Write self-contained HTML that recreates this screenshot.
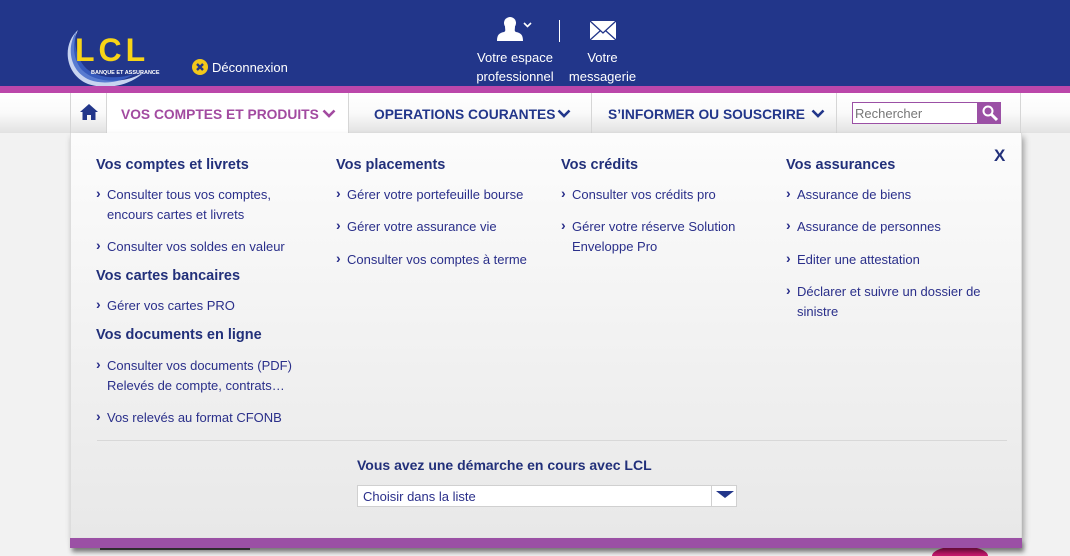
<!DOCTYPE html>
<html><head><meta charset="utf-8"><style>
*{margin:0;padding:0;box-sizing:border-box}
html,body{width:1070px;height:556px;overflow:hidden}
body{background:#f2f2f2;font-family:"Liberation Sans",Arial,sans-serif}
#root{position:relative;width:1070px;height:556px;overflow:hidden}
.a{position:absolute}
#hdr{left:0;top:0;width:1070px;height:86px;background:#22368a}
#stripe{left:0;top:86px;width:1070px;height:7px;background:#bb47aa}
#nav{left:0;top:93px;width:1070px;height:40px;background:linear-gradient(#fff 0%,#fafafa 50%,#e2e2e2 100%)}
.sep{top:93px;width:1px;height:40px;background:#d6d6d6}
.nt{top:107px;font-size:13.8px;font-weight:bold;color:#22368a;white-space:nowrap}
#panel{left:70px;top:133px;width:952px;height:405px;background:linear-gradient(#fcfcfc,#e8e8e8);border-left:1px solid #ddd;border-right:1px solid #ddd;box-shadow:2px 4px 6px rgba(0,0,0,.35)}
#pbar{left:70px;top:538px;width:952px;height:10px;background:#9b50a5;box-shadow:2px 4px 5px rgba(0,0,0,.5)}
.h{font-size:14.5px;font-weight:bold;color:#22307a;white-space:nowrap}
.l{font-size:13px;color:#2a2f8a;line-height:19.5px;padding-left:11px;white-space:nowrap}
.l:before{content:"›";position:absolute;left:0;top:-1px;font-weight:bold;font-size:14px}
.w{color:#fff;font-size:13px;text-align:center;line-height:19px}
</style></head><body><div id="root">
<div class="a" id="hdr"></div>
<div class="a" id="stripe"></div>
<div class="a" style="left:932px;top:546px;width:56px;height:10px;border-radius:28px 28px 0 0/10px 10px 0 0;background:#c8186e"></div>
<div class="a" style="left:100px;top:548px;width:150px;height:2px;background:#555"></div>
<svg class="a" style="left:60px;top:22px" width="110" height="64" viewBox="0 0 110 64">
<path d="M18 8 C2 22 4 52 28 62 C46 68 70 64 84 50 C66 62 36 62 22 48 C12 36 12 20 18 8Z" fill="#c8d4f0"/>
<path d="M16 10 C6 26 10 50 30 58 C44 63 62 60 74 52 C56 58 34 56 24 44 C16 34 14 22 16 10Z" fill="#3c64c8" opacity=".8"/>
<text x="15" y="39" font-family="Liberation Sans" font-size="32" fill="#f7d417" letter-spacing="4" font-weight="bold">LCL</text>
<text x="31" y="52" font-family="Liberation Sans" font-size="5.5" font-weight="bold" fill="#fff">BANQUE ET ASSURANCE</text>
</svg>
<svg class="a" style="left:192px;top:59px" width="16" height="16"><circle cx="8" cy="8" r="8" fill="#f2c81a"/><path d="M5 5 L11 11 M11 5 L5 11" stroke="#22368a" stroke-width="2.4"/></svg>
<div class="a" style="left:212px;top:60px;color:#fff;font-size:13px">Déconnexion</div>
<svg class="a" style="left:496px;top:16px" width="40" height="28"><circle cx="14" cy="7" r="6" fill="#fff"/><path d="M9 10 C9 14 10 15 8 16 C3 17 1 19 1 25 L27 25 C27 19 25 17 20 16 C18 15 19 14 19 10Z" fill="#fff"/><path d="M28 7 L31.5 10.5 L35 7" stroke="#fff" stroke-width="1.6" fill="none"/></svg>
<div class="a" style="left:559px;top:20px;width:1px;height:22px;background:#fff"></div>
<svg class="a" style="left:589px;top:20px" width="28" height="22"><rect x="1" y="1" width="26" height="19" fill="#fff"/><path d="M1 1 L14 13 L27 1 M1 20 L11 11 M27 20 L17 11" stroke="#22368a" stroke-width="1.3" fill="none"/></svg>
<div class="a w" style="left:470px;top:48px;width:90px">Votre espace<br>professionnel</div>
<div class="a w" style="left:565px;top:48px;width:75px">Votre<br>messagerie</div>
<div class="a" id="nav"></div>
<div class="a" style="left:106px;top:93px;width:242px;height:41px;background:#fff"></div>
<div class="a sep" style="left:70px"></div><div class="a sep" style="left:106px"></div><div class="a sep" style="left:348px"></div><div class="a sep" style="left:591px"></div><div class="a sep" style="left:836px"></div><div class="a sep" style="left:1020px"></div>
<svg class="a" style="left:80px;top:104px" width="18" height="16"><path d="M9 0 L18 8 L15.5 8 L15.5 16 L11 16 L11 11 L7 11 L7 16 L2.5 16 L2.5 8 L0 8Z" fill="#22368a"/></svg>
<div class="a nt" style="left:121px;color:#a24aa0">VOS COMPTES ET PRODUITS</div>
<div class="a nt" style="left:374px">OPERATIONS COURANTES</div>
<div class="a nt" style="left:608px">S’INFORMER OU SOUSCRIRE</div>
<svg class="a" style="left:322px;top:109px" width="14" height="10"><path d="M1.5 1.5 L7 7 L12.5 1.5" stroke="#a24aa0" stroke-width="2.6" fill="none"/></svg>
<svg class="a" style="left:557px;top:109px" width="14" height="10"><path d="M1.5 1.5 L7 7 L12.5 1.5" stroke="#22368a" stroke-width="2.6" fill="none"/></svg>
<svg class="a" style="left:811px;top:109px" width="14" height="10"><path d="M1.5 1.5 L7 7 L12.5 1.5" stroke="#22368a" stroke-width="2.6" fill="none"/></svg>
<div class="a" style="left:852px;top:102px;width:126px;height:22px;border:1px solid #9b50a5;background:#fff;font-size:13px;color:#777;padding:3px 0 0 2px">Rechercher</div>
<div class="a" style="left:978px;top:102px;width:23px;height:22px;background:#9b50a5"></div>
<svg class="a" style="left:981px;top:104px" width="18" height="18"><circle cx="7" cy="7" r="4.5" stroke="#fff" stroke-width="2" fill="none"/><path d="M10.5 10.5 L16 16" stroke="#fff" stroke-width="3"/></svg>
<div class="a" id="panel"></div>
<div class="a" id="pbar"></div>
<div class="a" style="left:994px;top:146px;font-size:17px;font-weight:bold;color:#22307a">X</div>

<div class="a h" style="left:96px;top:157px">Vos comptes et livrets</div>
<div class="a l" style="left:96px;top:185px">Consulter tous vos comptes,<br>encours cartes et livrets</div>
<div class="a l" style="left:96px;top:237px">Consulter vos soldes en valeur</div>
<div class="a h" style="left:96px;top:268px">Vos cartes bancaires</div>
<div class="a l" style="left:96px;top:296px">Gérer vos cartes PRO</div>
<div class="a h" style="left:96px;top:327px">Vos documents en ligne</div>
<div class="a l" style="left:96px;top:356px">Consulter vos documents (PDF)<br>Relevés de compte, contrats…</div>
<div class="a l" style="left:96px;top:408px">Vos relevés au format CFONB</div>

<div class="a h" style="left:336px;top:157px">Vos placements</div>
<div class="a l" style="left:336px;top:185px">Gérer votre portefeuille bourse</div>
<div class="a l" style="left:336px;top:217px">Gérer votre assurance vie</div>
<div class="a l" style="left:336px;top:250px">Consulter vos comptes à terme</div>

<div class="a h" style="left:561px;top:157px">Vos crédits</div>
<div class="a l" style="left:561px;top:185px">Consulter vos crédits pro</div>
<div class="a l" style="left:561px;top:217px">Gérer votre réserve Solution<br>Enveloppe Pro</div>

<div class="a h" style="left:786px;top:157px">Vos assurances</div>
<div class="a l" style="left:786px;top:185px">Assurance de biens</div>
<div class="a l" style="left:786px;top:217px">Assurance de personnes</div>
<div class="a l" style="left:786px;top:250px">Editer une attestation</div>
<div class="a l" style="left:786px;top:282px">Déclarer et suivre un dossier de<br>sinistre</div>

<div class="a" style="left:97px;top:440px;width:910px;height:1px;background:#d8d8d8"></div>
<div class="a h" style="left:357px;top:457px;font-size:14px">Vous avez une démarche en cours avec LCL</div>
<div class="a" style="left:357px;top:485px;width:380px;height:22px;background:#fff;border:1px solid #d0d0d0;font-size:13px;color:#2a2f8a;padding:3px 0 0 5px">Choisir dans la liste</div>
<div class="a" style="left:711px;top:486px;width:1px;height:20px;background:#d0d0d0"></div>
<svg class="a" style="left:716px;top:491px" width="18" height="8"><path d="M0 0 L18 0 L9 7Z" fill="#22368a"/></svg>
</div></body></html>
